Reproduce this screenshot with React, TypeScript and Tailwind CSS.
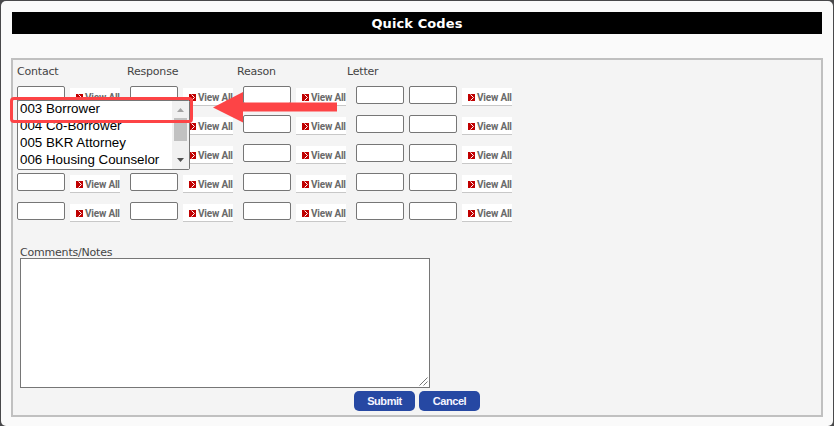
import React from "react";

const ROWS = [0, 1, 2, 3, 4];
const OPTIONS = ["003 Borrower", "004 Co-Borrower", "005 BKR Attorney", "006 Housing Counselor"];

function CodeInput() {
  return <input className="block h-[18px] w-12 rounded-[2px] border border-[#767676] bg-white px-1 text-[11px] outline-none" />;
}

function ViewAll() {
  return (
    <button className="mt-0.5 flex h-[18px] w-[50px] shrink-0 items-center border-b border-[#c8c8c8] bg-white pl-1.5">
      <svg width="7" height="7" viewBox="0 0 7 7" className="mt-px shrink-0">
        <rect width="7" height="7" fill="#c00000" />
        <path d="M2.500 .5l3 3-3 3" fill="none" stroke="#fff" strokeWidth="1" />
      </svg>
      <span className="mt-px ml-0.5 whitespace-nowrap font-['Roboto',sans-serif] text-[10px] leading-[17px] font-bold tracking-[-0.200px] text-[#6a6a6a]">View All</span>
    </button>
  );
}

function CodeRow() {
  return (
    <div className="flex h-[29px] items-start gap-[10px]">
      {[0, 1, 2].map((n) => (
        <div key={n} className="flex gap-[5px]">
          <CodeInput />
          <ViewAll />
        </div>
      ))}
      <div className="flex gap-[5px]">
        <CodeInput />
        <CodeInput />
        <ViewAll />
      </div>
    </div>
  );
}

function ContactList() {
  return (
    <div className="absolute top-[40px] left-[4px] flex h-[70px] w-[173px] rounded-[2px] border border-[#767676] bg-white">
      <ul className="-mt-px flex-1 pl-0.5 font-['Liberation_Sans',Arial,sans-serif] text-[13.333px] leading-[17px] whitespace-nowrap text-black">
        {OPTIONS.map((o) => (
          <li key={o}>{o}</li>
        ))}
      </ul>
      <div className="flex w-[17px] flex-col items-center bg-[#f1f1f1]">
        <svg width="17" height="17" viewBox="0 0 17 17">
          <path d="M5 11h7l-3.500-4z" fill="#a3a3a3" />
        </svg>
        <div className="h-[23px] w-[13px] bg-[#c1c1c1]" />
        <svg width="17" height="17" viewBox="0 0 17 17" className="mt-auto">
          <path d="M5 6h7l-3.500 4z" fill="#505050" />
        </svg>
      </div>
    </div>
  );
}

export default function App() {
  return (
    <div className="h-[426px] w-[834px] overflow-hidden bg-[#48484a] pt-px pr-px pl-px font-['DejaVu_Sans',Verdana,sans-serif] text-[11px] tracking-[-0.200px] text-[#444]">
      <main className="h-[425px] rounded-[5px] bg-[#fafafa] px-[10px] pt-[11px]">
        <h1 className="mx-px h-[22px] bg-black text-center font-['DejaVu_Sans',Verdana,sans-serif] text-[13px] leading-[23px] font-bold tracking-[0.100px] text-white">Quick Codes</h1>
        <section className="relative mt-6 h-[359px] w-[812px] border-2 border-[#c0c0c0] bg-[#f4f4f4]">
          <div className="flex h-[26px] pt-1 pl-1 leading-[15px]">
            <span className="w-[110px]">Contact</span>
            <span className="w-[110px]">Response</span>
            <span className="w-[110px]">Reason</span>
            <span>Letter</span>
          </div>
          <div className="pl-1">
            {ROWS.map((r) => (
              <CodeRow key={r} />
            ))}
          </div>
          <div className="mt-[14px] pl-[7px]">
            <label className="block h-[13px] leading-[15px]">Comments/Notes</label>
            <div className="relative h-[130px] w-[410px]">
              <textarea className="block h-full w-full resize-none border border-[#767676] bg-white outline-none" />
              <svg className="absolute right-0.5 bottom-0.5" width="9" height="9" viewBox="0 0 9 9">
                <path d="M.5 8.500l8-8M4.500 8.500l4-4" stroke="#777" strokeWidth="1" />
              </svg>
            </div>
          </div>
          <div className="mt-[3px] flex gap-1 pl-[341px] font-['Liberation_Sans',Arial,sans-serif] text-[11px] leading-5 font-bold tracking-[-0.450px] text-[#f4f4ff]">
            <button className="h-5 w-[61px] rounded-[5px] bg-[#2648a3]">Submit</button>
            <button className="h-5 w-[61px] rounded-[5px] bg-[#2648a3]">Cancel</button>
          </div>
          <div className="tracking-normal">
            <ContactList />
          </div>
          <div className="absolute top-[37px] left-[-3px] h-[26px] w-[183px] rounded-[4px] border-3 border-[#fd4446]" />
          <svg className="absolute top-[32px] left-[200px]" width="124" height="31" viewBox="0 0 124 31">
            <path d="M0 15.500L30 0v10.500h94v9H30V30.500z" fill="#fd4446" />
          </svg>
        </section>
      </main>
    </div>
  );
}
